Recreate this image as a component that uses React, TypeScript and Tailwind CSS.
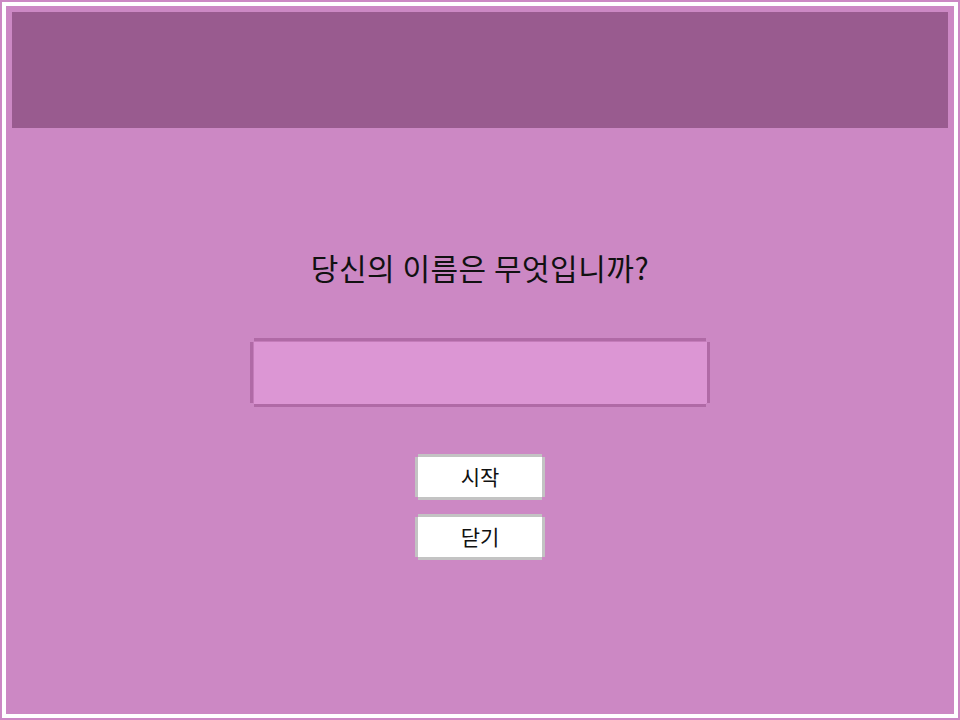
import { useState } from "react";

export default function App() {
  const [name, setName] = useState("");

  return (
    <div className="h-[720px] w-[960px] bg-[#cc88c4] p-[2px] font-['Noto_Sans_CJK_KR',sans-serif]">
      <div className="flex h-full flex-col border-4 border-white p-[6px]">
        {/* Title bar */}
        <header className="h-[116px] shrink-0 bg-[#995b8f]" />

        {/* Name prompt */}
        <main className="flex flex-1 flex-col items-center">
          <h1 className="mt-[117px] text-[30px] leading-[44px] text-[#111] tracking-[0.5px]">
            당신의 이름은 무엇입니까?
          </h1>

          <div className="mt-[49px] h-[69px] w-[460px] bg-[#b06aa6] p-[3px] [clip-path:polygon(4px_0,calc(100%-4px)_0,calc(100%-4px)_4px,100%_4px,100%_calc(100%-4px),calc(100%-4px)_calc(100%-4px),calc(100%-4px)_100%,4px_100%,4px_calc(100%-4px),0_calc(100%-4px),0_4px,4px_4px)]">
            <input
              value={name}
              onChange={(e) => setName(e.target.value)}
              className="h-full w-full border-t border-l border-[#c47cba] bg-[#dc96d4] px-3 text-[24px] text-[#111] outline-none"
            />
          </div>

          <div className="mt-[47px] flex flex-col gap-[14px]">
            <button className="h-[46px] w-[130px] bg-[#c3c3c3] p-[3px] [clip-path:polygon(3px_0,calc(100%-3px)_0,calc(100%-3px)_3px,100%_3px,100%_calc(100%-3px),calc(100%-3px)_calc(100%-3px),calc(100%-3px)_100%,3px_100%,3px_calc(100%-3px),0_calc(100%-3px),0_3px,3px_3px)]">
              <span className="flex h-full w-full items-center justify-center bg-white text-[21px] text-[#111]">
                시작
              </span>
            </button>
            <button className="h-[46px] w-[130px] bg-[#c3c3c3] p-[3px] [clip-path:polygon(3px_0,calc(100%-3px)_0,calc(100%-3px)_3px,100%_3px,100%_calc(100%-3px),calc(100%-3px)_calc(100%-3px),calc(100%-3px)_100%,3px_100%,3px_calc(100%-3px),0_calc(100%-3px),0_3px,3px_3px)]">
              <span className="flex h-full w-full items-center justify-center bg-white text-[21px] text-[#111]">
                닫기
              </span>
            </button>
          </div>
        </main>
      </div>
    </div>
  );
}
